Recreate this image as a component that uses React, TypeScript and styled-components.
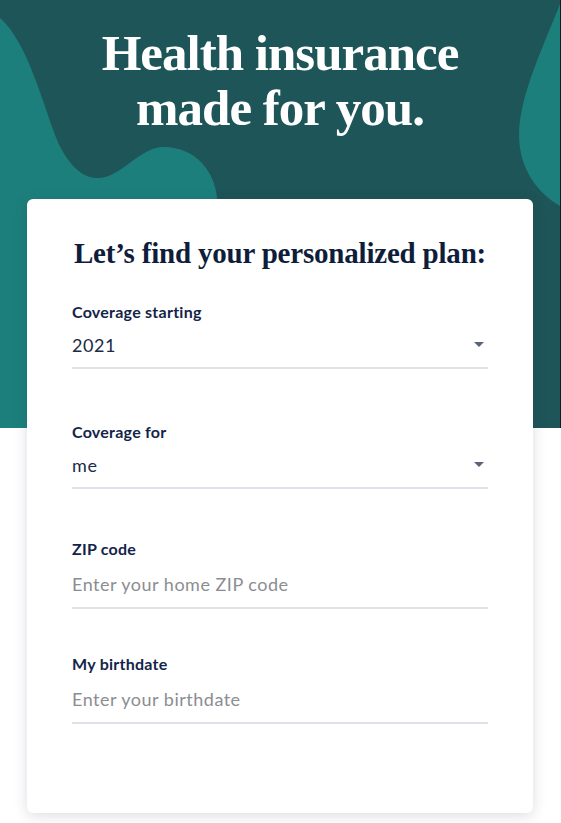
import React from "react";
import styled, { createGlobalStyle } from "styled-components";

const GlobalStyle = createGlobalStyle`
  * { box-sizing: border-box; }
  html, body { margin: 0; padding: 0; background: #ffffff; }
  body { font-family: Lato, "Noto Sans", sans-serif; }
`;

const Page = styled.div`
  width: 561px;
  min-height: 823px;
  background: #ffffff;
  overflow: hidden;
`;

const Hero = styled.header`
  position: relative;
  height: 428px;
  background: #1d5558;
  border-right: 1px solid #0c1f21;
  overflow: hidden;
`;

const Blobs = styled.svg`
  position: absolute;
  inset: 0;
  width: 100%;
  height: 100%;
`;

const Title = styled.h1`
  position: relative;
  margin: 0;
  padding-top: 26px;
  font-family: "Liberation Serif", "Times New Roman", serif;
  font-weight: 700;
  font-size: 51px;
  line-height: 55px;
  letter-spacing: -1px;
  color: #ffffff;
  text-align: center;
`;

const TitleLine = styled.span`
  display: block;
`;

const Card = styled.main`
  position: relative;
  margin: -229px 28px 9px 27px;
  padding: 36px 45px 89px;
  background: #ffffff;
  border-radius: 6px;
  box-shadow: 0 3px 14px rgba(30, 45, 70, 0.16);
`;

const Heading = styled.h2`
  margin: 0 0 31px;
  font-family: "Liberation Serif", "Times New Roman", serif;
  font-weight: 700;
  font-size: 29px;
  line-height: 36px;
  letter-spacing: -0.2px;
  color: #0d1d3a;
  text-align: center;
`;

const Form = styled.form`
  display: flex;
  flex-direction: column;
`;

const Field = styled.label<{ $space?: number }>`
  display: flex;
  flex-direction: column;
  margin-top: ${(p) => p.$space ?? 0}px;
`;

const Label = styled.span`
  font-size: 16px;
  line-height: 20px;
  font-weight: 700;
  color: #13244a;
  letter-spacing: 0.25px;
`;

const Control = styled.div<{ $tall?: boolean }>`
  display: flex;
  align-items: center;
  justify-content: space-between;
  height: ${(p) => (p.$tall ? 50 : 47)}px;
  padding-top: ${(p) => (p.$tall ? 1 : 0)}px;
  border-bottom: 2px solid #dfe3e9;
`;

const Value = styled.span`
  font-size: 18px;
  color: #1c2a47;
  letter-spacing: 0.6px;
`;

const Input = styled.input`
  width: 100%;
  border: none;
  outline: none;
  padding: 0;
  background: transparent;
  font-family: Lato, "Noto Sans", sans-serif;
  font-size: 18px;
  letter-spacing: 0.5px;
  color: #1c2a47;
  &::placeholder {
    color: #8b8d92;
  }
`;

const Caret = styled.svg`
  width: 10px;
  height: 5px;
  margin-right: 4px;
  flex-shrink: 0;
`;

const CaretIcon = () => (
  <Caret viewBox="0 0 10 5">
    <path d="M0 0 L10 0 L5 5 Z" fill="#5a6377" />
  </Caret>
);

export default function App() {
  return (
    <Page>
      <GlobalStyle />
      <Hero>
        <Blobs viewBox="0 0 561 428" preserveAspectRatio="none">
          <path
            d="M0 18 C28 42 44 108 58 142 C70 168 84 178 98 178 C121 178 140 147 164 147 C196 147 218 172 218 206 L218 428 L0 428 Z"
            fill="#1d7f7c"
          />
          <path
            d="M561 4 C545 45 520 96 520 135 C520 170 540 194 561 206 Z"
            fill="#1d7f7c"
          />
        </Blobs>
        <Title>
          <TitleLine>Health insurance</TitleLine>
          <TitleLine>made for you.</TitleLine>
        </Title>
      </Hero>
      <Card>
        <Heading>Let’s find your personalized plan:</Heading>
        <Form onSubmit={(e) => e.preventDefault()}>
          <Field>
            <Label>Coverage starting</Label>
            <Control>
              <Value>2021</Value>
              <CaretIcon />
            </Control>
          </Field>
          <Field $space={53}>
            <Label>Coverage for</Label>
            <Control>
              <Value>me</Value>
              <CaretIcon />
            </Control>
          </Field>
          <Field $space={50}>
            <Label>ZIP code</Label>
            <Control $tall>
              <Input placeholder="Enter your home ZIP code" />
            </Control>
          </Field>
          <Field $space={45}>
            <Label>My birthdate</Label>
            <Control $tall>
              <Input placeholder="Enter your birthdate" />
            </Control>
          </Field>
        </Form>
      </Card>
    </Page>
  );
}
